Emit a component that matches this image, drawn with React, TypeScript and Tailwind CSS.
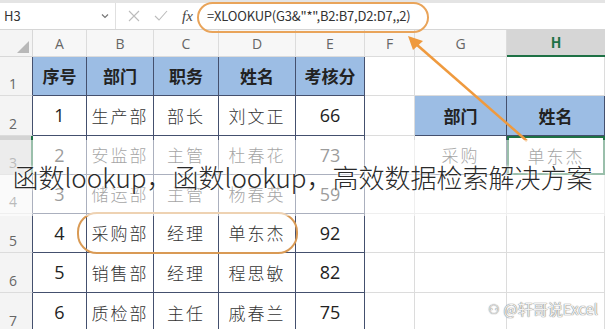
import React from "react";

const cols = ["A", "B", "C", "D", "E", "F", "G", "H"];
const rowHeights = [39, 40, 39, 39, 39, 40, 40];

const data: string[][] = [
  ["序号", "部门", "职务", "姓名", "考核分", "", "", ""],
  ["1", "生产部", "部长", "刘文正", "66", "", "部门", "姓名"],
  ["2", "安监部", "主管", "杜春花", "73", "", "采购", "单东杰"],
  ["3", "储运部", "主管", "杨春英", "59", "", "", ""],
  ["4", "采购部", "经理", "单东杰", "92", "", "", ""],
  ["5", "销售部", "经理", "程思敏", "82", "", "", ""],
  ["6", "质检部", "主任", "戚春兰", "75", "", "", ""],
];

function FormulaBar() {
  return (
    <div className="h-[30px] border-t-[3px] border-[#e4e4e4] border-b border-b-[#d6d6d6] flex items-center text-[13px] text-[#333]">
      <div className="w-[116px] flex items-center justify-between pl-[4px] pr-[6px] border-r border-[#e0e0e0] h-full">
        <span>H3</span>
        <svg width="8" height="6" viewBox="0 0 8 6">
          <path d="M1 1.5 L4 4.5 L7 1.5" stroke="#777" strokeWidth="1.2" fill="none" />
        </svg>
      </div>
      <div className="flex items-center gap-[14px] pl-[12px] w-[82px]">
        <svg width="12" height="12" viewBox="0 0 12 12">
          <path d="M1 1 L11 11 M11 1 L1 11" stroke="#bcbcbc" strokeWidth="1.1" />
        </svg>
        <svg width="14" height="12" viewBox="0 0 14 12">
          <path d="M1 6 L5 10 L13 1" stroke="#bcbcbc" strokeWidth="1.1" fill="none" />
        </svg>
        <span className="italic font-['Liberation_Serif',serif] text-[15px] text-[#444]">fx</span>
      </div>
      <span className="pl-[9px] tracking-[-0.2px]">=XLOOKUP(G3&amp;"*",B2:B7,D2:D7,,2)</span>
    </div>
  );
}

export default function App() {
  return (
    <div className="relative w-[605px] h-[329px] overflow-hidden bg-white font-['Noto_Sans_CJK_SC','Noto_Sans',sans-serif]">
      <FormulaBar />
      <div className="grid grid-cols-[33px_54px_67px_65px_77px_69px_50px_92px_98px]">
        {/* column header row */}
        <div className="h-[27px] bg-[#f4f4f4] border-r border-b border-[#d8d8d8] flex items-end justify-end p-[3px]">
          <div className="w-0 h-0 border-l-[12px] border-l-transparent border-b-[12px] border-b-[#b8b8b8]" />
        </div>
        {cols.map((c) => (
          <div
            key={c}
            className={
              c === "H"
                ? "h-[27px] bg-[#d6d6d6] border-b-2 border-[#1e7145] flex items-center justify-center text-[14px] font-bold text-[#1e7145]"
                : "h-[27px] bg-[#f7f7f7] border-r border-b border-[#dcdcdc] flex items-center justify-center text-[14px] text-[#666] font-['Open_Sans',sans-serif]"
            }
          >
            {c}
          </div>
        ))}
        {data.map((row, r) => (
          <React.Fragment key={r}>
            <div
              style={{ height: rowHeights[r] }}
              className={
                r === 2
                  ? "bg-[#d4d4d4] border-r-2 border-r-[#1e7145] border-b border-b-[#c8c8c8] flex items-end pl-[9px] pb-[1px] text-[14px] text-[#666] font-['Open_Sans',sans-serif]"
                  : "bg-[#f4f4f4] border-r border-r-[#44506e] border-b border-b-[#dcdcdc] flex items-end pl-[9px] pb-[1px] text-[14px] text-[#666] font-['Open_Sans',sans-serif]"
              }
            >
              {r + 1}
            </div>
            {row.map((v, c) => {
              const inTable = c <= 4;
              const inLookup = (c === 6 || c === 7) && (r === 1 || r === 2);
              const header = (inTable && r === 0) || (inLookup && r === 1);
              const selected = r === 2 && c === 7;
              let cls = "flex items-center justify-center ";
              if (selected) cls += "border-2 border-[#1e7145] ";
              else if (inTable || inLookup) cls += "border-r border-b border-[#44506e] ";
              else cls += "border-r border-b border-[#dcdcdc] ";
              if (header) cls += "bg-[#9cbde4] font-bold text-[17px] text-[#222] ";
              else if (/^\d+$/.test(v)) cls += "text-[18px] text-[#222] font-['Open_Sans',sans-serif] ";
              else cls += "text-[17px] tracking-[2px] text-[#333] font-light ";
              return (
                <div key={c} style={{ height: rowHeights[r] }} className={cls}>
                  {v}
                </div>
              );
            })}
          </React.Fragment>
        ))}
      </div>

      {/* highlight around the found row */}
      <div className="absolute left-[77px] top-[212px] w-[221px] h-[42px] rounded-[20px] border-2 border-[#d99a55]" />
      {/* formula highlight */}
      <div className="absolute left-[197px] top-[2px] w-[232px] h-[31px] rounded-[16px] border-2 border-[#e9a45a]" />

      {/* arrow from H3 to the formula */}
      <svg className="absolute inset-0" width="605" height="329">
        <line x1="527" y1="141" x2="416" y2="44" stroke="#ef9a3e" strokeWidth="2.6" />
        <path d="M408 36 L423 41 L413 50 Z" fill="#ef9a3e" />
      </svg>

      {/* caption band */}
      <div className="absolute left-0 right-0 top-[140px] h-[76px] bg-white/55 flex items-center justify-center">
        <span className="text-[26px] leading-none font-light text-[#2a2a2a] whitespace-nowrap [text-shadow:0_0_3px_#fff,0_0_3px_#fff] -mt-[3px]">
          函数lookup，函数lookup，高效数据检索解决方案
        </span>
      </div>

      {/* watermark */}
      <div className="absolute right-[7px] bottom-[9px] flex items-center gap-[3px] text-[15px] text-[#f2f2f2] [text-shadow:0_0_1px_#777,0_0_1px_#777]">
        <span className="text-[13px]">⚇</span>
        <span>@轩哥说Excel</span>
      </div>
    </div>
  );
}
